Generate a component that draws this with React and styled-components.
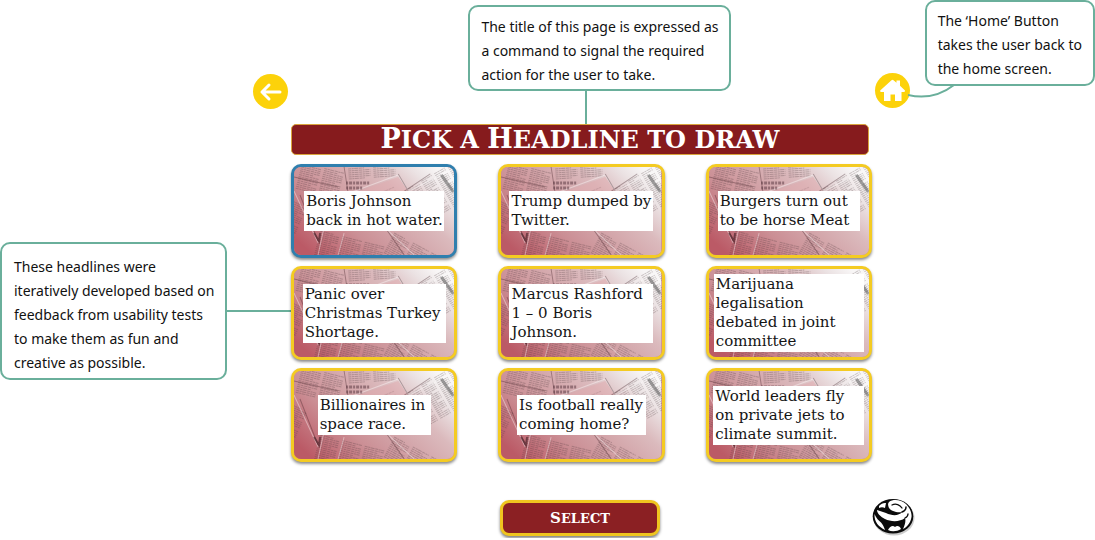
import React from "react";
import styled, { createGlobalStyle } from "styled-components";

const GlobalStyle = createGlobalStyle`
  * { box-sizing: border-box; }
  body { margin: 0; background: #fff; color: #111; font-family: "Noto Sans", sans-serif; }
`;

const Page = styled.main`
  display: grid;
  grid-template-columns: 291fr 581fr 223fr;
  align-items: start;
`;

const LeftRail = styled.aside`
  display: flex;
  flex-direction: column;
  padding-top: 74px;
  gap: 133px;
`;

const RoundButton = styled.button`
  display: grid;
  place-items: center;
  flex: none;
  width: 35px;
  height: 35px;
  padding: 0;
  border: 0;
  border-radius: 50%;
  background: #fcd20a;
  cursor: pointer;
`;

const BackButton = styled(RoundButton)`
  align-self: flex-end;
  margin-right: 3px;
`;

const Note = styled.p`
  margin: 0;
  padding: ${(p) => p.$pad};
  border: 2px solid #6aaf9b;
  border-radius: 10px;
  background: #fff;
  font-size: 14px;
  line-height: 24px;
  white-space: nowrap;
`;

const SideNoteRow = styled.div`
  display: flex;
  align-items: center;
`;

const HorizontalLink = styled.span`
  flex: 1;
  height: 2px;
  background: #6aaf9b;
`;

const Board = styled.section`
  display: flex;
  flex-direction: column;
`;

const TitleNote = styled.div`
  display: flex;
  flex-direction: column;
  align-items: center;
  align-self: center;
  padding: 5px 0 0 36px;
`;

const VerticalLink = styled.span`
  width: 2px;
  height: 33px;
  margin-right: 28px;
  background: #6aaf9b;
`;

const Title = styled.h1`
  margin: 0 3px 0 0;
  border: 1px solid #d9a43c;
  border-radius: 5px;
  background: #861b1d;
  color: #fff;
  font-family: "DejaVu Serif", serif;
  font-size: 24px;
  font-weight: 700;
  line-height: 28px;
  text-align: center;
  text-transform: uppercase;
  white-space: nowrap;
`;

const TitleInitial = styled.span`
  font-size: 27px;
  line-height: 1;
`;

const CardGrid = styled.div`
  display: grid;
  grid-template-columns: repeat(3, 1fr);
  gap: 8px 41px;
  padding-top: 9px;
`;

const Card = styled.button`
  display: grid;
  place-items: center;
  height: 94px;
  padding: 0;
  overflow: hidden;
  border: 3px solid ${(p) => (p.$selected ? "#2f7fae" : "#f4cb22")};
  border-radius: 10px;
  background: #c98089;
  box-shadow: 0 2px 3px rgba(0, 0, 0, 0.45);
  cursor: pointer;
`;

const Paper = styled.svg`
  grid-area: 1 / 1;
  width: 100%;
  height: 88px;
`;

const Headline = styled.span`
  grid-area: 1 / 1;
  z-index: 1;
  width: ${(p) => p.$width}px;
  padding: 1px 2px;
  background: #fff;
  color: #151515;
  font-family: "DejaVu Serif", serif;
  font-size: 15px;
  line-height: 19px;
  text-align: left;
  white-space: pre;
`;

const SelectButton = styled.button`
  align-self: center;
  width: 160px;
  height: 36px;
  margin: 38px 3px 0 0;
  padding: 0;
  border: 3px solid #efc51f;
  border-radius: 9px;
  background: #8b2023;
  box-shadow: 0 2px 3px rgba(0, 0, 0, 0.5);
  color: #fff;
  font-family: "DejaVu Serif", serif;
  font-size: 13px;
  font-weight: 700;
  text-transform: uppercase;
  cursor: pointer;

  &::first-letter {
    font-size: 15px;
  }
`;

const RightRail = styled.aside`
  display: flex;
  flex-direction: column;
  gap: 388px;
`;

const HomeRow = styled.div`
  display: flex;
  align-items: flex-start;
  justify-content: flex-end;
`;

const HomeGroup = styled.div`
  position: relative;
  flex: 1;
  padding: 73px 0 0 3px;
`;

const Curve = styled.svg`
  position: absolute;
  top: 84px;
  left: 36px;
  width: 50px;
  height: 16px;
`;

const Mascot = styled.svg`
  width: 44px;
  height: 42px;
`;

const headlines = [
  ["Boris Johnson\nback in hot water.", 140],
  ["Trump dumped by\nTwitter.", 144],
  ["Burgers turn out\nto be horse Meat", 142],
  ["Panic over\nChristmas Turkey\nShortage.", 143],
  ["Marcus Rashford\n1 – 0 Boris\nJohnson.", 144],
  ["Marijuana\nlegalisation\ndebated in joint\ncommittee", 150],
  ["Billionaires in\nspace race.", 113],
  ["Is football really\ncoming home?", 129],
  ["World leaders fly\non private jets to\nclimate summit.", 151],
];

function Columns({ x, y, w, rows, angle, count = 3 }) {
  const lines = [];
  for (let c = 0; c < count; c++) {
    for (let r = 0; r < rows; r++) {
      lines.push(
        <path
          key={`${c}-${r}`}
          d={`M${c * (w + 3)} ${r * 2}h${w - ((r * 7 + c * 3) % 5 === 0 ? 6 : 0)}`}
        />
      );
    }
  }
  return (
    <g
      transform={`translate(${x} ${y}) rotate(${angle})`}
      stroke="#4b3a3e"
      strokeOpacity=".28"
      strokeDasharray="3 .6 2 .5 4 .7"
    >
      {lines}
    </g>
  );
}

function Newsprint({ id }) {
  return (
    <Paper viewBox="0 0 160 88" preserveAspectRatio="xMidYMid slice" aria-hidden="true">
      <defs>
        <linearGradient id={id} x1="0" y1=".8" x2="1" y2=".2">
          <stop offset="0" stopColor="#bb5a66" />
          <stop offset=".3" stopColor="#cb8f95" />
          <stop offset=".7" stopColor="#dbbabd" />
          <stop offset=".88" stopColor="#ebe2e3" />
          <stop offset="1" stopColor="#f8f6f6" />
        </linearGradient>
      </defs>
      <rect width="160" height="88" fill={`url(#${id})`} />
      <Columns x={8} y={-4} w={20} rows={14} angle={14} count={2} />
      <Columns x={54} y={2} w={22} rows={6} angle={-4} count={2} />
      <Columns x={-2} y={34} w={17} rows={24} angle={24} count={1} />
      <Columns x={66} y={34} w={17} rows={16} angle={-22} count={2} />
      <Columns x={26} y={64} w={20} rows={14} angle={14} count={3} />
      <Columns x={114} y={22} w={12} rows={20} angle={-30} count={4} />
      <Columns x={100} y={66} w={18} rows={12} angle={28} count={3} />
      <path d="M50 30 104 10l10 14-54 24Z" fill="#e0a9ae" fillOpacity=".5" />
      <g fill="none" stroke="#fff" strokeOpacity=".4">
        <path d="M50 28 104 8 114 24M0 24 24 76M106 28 160 2M90 60l30 28M30 60l-6 28M50 66l-6 22" />
      </g>
      <g fill="none" stroke="#3a1a20" strokeOpacity=".35">
        <path d="M50 0 54 26M104 7l10 17M6 28l18 46M106 27l30-20M92 62l18 26M0 10l44 10" />
      </g>
      <path d="M52 16h23M52 21h17" stroke="#51303a" strokeOpacity=".5" strokeWidth="3" strokeDasharray="2 1 3 1" />
      <path d="m147 8 12 17" stroke="#555" strokeOpacity=".55" strokeWidth="3" />
      <path d="m20 66 5 8 1-8" fill="none" stroke="#3a1a20" strokeOpacity=".55" strokeWidth="2" />
    </Paper>
  );
}

export default function App() {
  return (
    <>
      <GlobalStyle />
      <Page>
        <LeftRail>
          <BackButton aria-label="Back">
            <svg width="24" height="24" viewBox="0 0 24 24" fill="none" stroke="#fff" strokeWidth="3" strokeLinecap="round" strokeLinejoin="round">
              <path d="M21 12H3M10 5 3 12l7 7" />
            </svg>
          </BackButton>
          <SideNoteRow>
            <Note $pad="11px 10px 3px 12px">
              These headlines were<br />iteratively developed based on<br />feedback from usability tests<br />to make them as fun and<br />creative as possible.
            </Note>
            <HorizontalLink />
          </SideNoteRow>
        </LeftRail>

        <Board>
          <TitleNote>
            <Note $pad="8px 10px 2px 11px">
              The title of this page is expressed as<br />a command to signal the required<br />action for the user to take.
            </Note>
            <VerticalLink />
          </TitleNote>
          <Title>
            <TitleInitial>P</TitleInitial>ick a <TitleInitial>H</TitleInitial>eadline to draw
          </Title>
          <CardGrid>
            {headlines.map(([text, width], i) => (
              <Card key={text} $selected={i === 0} aria-pressed={i === 0}>
                <Newsprint id={`tint-${i}`} />
                <Headline $width={width}>{text}</Headline>
              </Card>
            ))}
          </CardGrid>
          <SelectButton>Select</SelectButton>
        </Board>

        <RightRail>
          <HomeRow>
            <HomeGroup>
              <RoundButton aria-label="Home">
                <svg width="27" height="25" viewBox="0 0 27 25" fill="#fff">
                  <path d="M12.500 2.200Q13.500 1.300 14.500 2.200L17.500 4.800V2.500H21V7.800L26 12.400Q26.300 14 24.500 14H22.500V23H16V16.500H11.500V23H5V14H2.500Q.7 14 1.200 12.400Z" />
                </svg>
              </RoundButton>
              <Curve viewBox="0 0 50 16" fill="none" stroke="#6aaf9b" strokeWidth="2">
                <path d="M0 11C17 15 33 11 46 1" />
              </Curve>
            </HomeGroup>
            <Note $pad="7px 11px 3px 11px">
              The ‘Home’ Button<br />takes the user back to<br />the home screen.
            </Note>
          </HomeRow>
          <Mascot viewBox="0 0 44 42" role="img" aria-label="Laughing face">
            <ellipse cx="22" cy="22" rx="20.500" ry="17.500" fill="#999" opacity=".5" />
            <ellipse cx="21" cy="20.300" rx="20.300" ry="17.300" fill="#0b0b0b" />
            <g fill="#fff">
              <path d="M17 6C21 3 29 3.500 34 8C38 12 40 17 39.500 21C38.500 27 35 31 31 33C33 29 34 25 33 22C28 26 19 26 13 23C8 20.500 5 17 5 14C8 15 11 16 14 17C20 20 27 20 30 16C25 17 19 15 17 12C16 10 15.500 7.500 17 6Z" />
              <path d="M7 10C9 7.500 12 6.500 14 7L13 12C11 11 9 11 7 12Z" />
              <path d="M2.500 18C4 22 7 25 9 26.500C11 29 12 31 13 34C7 31 2 26 2.500 18Z" />
              <path d="M16 34C18 30 21 29 23 31C25 29 28 30 29 33C25 35.500 20 36 16 34Z" />
            </g>
            <g fill="none" stroke="#0b0b0b" strokeLinecap="round">
              <path d="M20 9C24 7 28 9 30 12" strokeWidth="1.300" />
              <path d="M30 16C33 15 34 13 34 11" strokeWidth="1.500" />
              <path d="M33 22C35 21 36 19.500 36 18" strokeWidth="1.300" />
            </g>
          </Mascot>
        </RightRail>
      </Page>
    </>
  );
}
